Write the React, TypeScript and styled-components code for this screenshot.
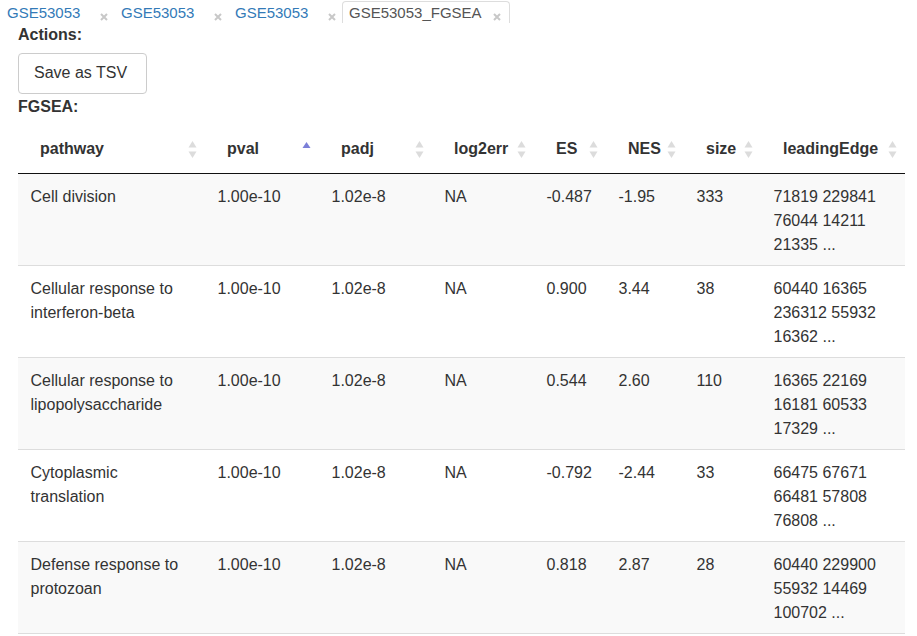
import React from "react";
import styled, { createGlobalStyle } from "styled-components";

const GlobalStyle = createGlobalStyle`
  html, body {
    margin: 0;
    padding: 0;
    background: #fff;
  }
  body {
    font-family: "Liberation Sans", Arial, Helvetica, sans-serif;
    font-size: 16px;
    line-height: 24px;
    color: #333;
  }
`;

const Page = styled.div`
  width: 917px;
`;

const TabBar = styled.ul`
  list-style: none;
  margin: 0;
  padding: 1px 0 0 0;
  display: flex;
  height: 22px;
  overflow: hidden;
`;

const Tab = styled.li<{ $active?: boolean }>`
  display: flex;
  align-items: flex-start;
  height: 26px;
  box-sizing: border-box;
  padding: 1px 8px 0 6px;
  border: 1px solid ${(p) => (p.$active ? "#ddd" : "transparent")};
  border-bottom: none;
  border-radius: 4px 4px 0 0;
  font-size: 15px;
  line-height: 20px;
  color: ${(p) => (p.$active ? "#555" : "#337ab7")};
`;

const TabLabel = styled.span`
  white-space: nowrap;
`;

const Close = styled.span<{ $gap: number }>`
  margin-left: ${(p) => p.$gap}px;
  margin-top: 10px;
  display: flex;
`;

const Content = styled.div`
  padding: 0 12px 0 18px;
`;

const Label = styled.div`
  font-weight: bold;
  font-size: 16px;
  line-height: 24px;
`;

const ActionRow = styled.div`
  padding: 6px 0 1px;
`;

const Button = styled.button`
  font-family: inherit;
  font-size: 16px;
  line-height: 24px;
  color: #333;
  background: #fff;
  border: 1px solid #ccc;
  border-radius: 4px;
  padding: 7px 19px 8px 15px;
  cursor: pointer;
`;

const Table = styled.table`
  width: 887px;
  border-collapse: collapse;
  margin-top: 6px;
  table-layout: fixed;
`;

const Th = styled.th<{ $w: number }>`
  box-sizing: border-box;
  width: ${(p) => p.$w}px;
  text-align: left;
  font-weight: bold;
  padding: 12px 0 12px 22px;
  border-bottom: 1px solid #111;
  white-space: nowrap;
`;

const ThInner = styled.div`
  display: flex;
  align-items: center;
  justify-content: space-between;
  padding-right: 8px;
`;

const Tr = styled.tr<{ $odd: boolean }>`
  background: ${(p) => (p.$odd ? "#f9f9f9" : "#fff")};
  border-bottom: 1px solid #ddd;
`;

const Td = styled.td`
  vertical-align: top;
  padding: 11px 10px 8px 12.5px;
  word-wrap: break-word;
`;

const SortBoth = () => (
  <svg width="9" height="19" viewBox="0 0 9 19">
    <path d="M4.5 1 L8.5 7.5 L0.5 7.5 Z" fill="#dcdcdc" />
    <path d="M4.5 18 L8.5 11.5 L0.5 11.5 Z" fill="#dcdcdc" />
  </svg>
);

const SortAsc = () => (
  <svg width="9" height="19" viewBox="0 0 9 19">
    <path d="M4.5 2 L8.5 8 L0.5 8 Z" fill="#7b7fd8" />
  </svg>
);

const CloseIcon = () => (
  <svg width="8" height="8" viewBox="0 0 8 8">
    <path d="M1 1 L7 7 M7 1 L1 7" stroke="#c8c8c8" strokeWidth="2" />
  </svg>
);

const columns = [
  { name: "pathway", w: 187 },
  { name: "pval", w: 114, asc: true },
  { name: "padj", w: 113 },
  { name: "log2err", w: 102 },
  { name: "ES", w: 72 },
  { name: "NES", w: 78 },
  { name: "size", w: 77 },
  { name: "leadingEdge", w: 144 },
];

const rows = [
  ["Cell division", "1.00e-10", "1.02e-8", "NA", "-0.487", "-1.95", "333", "71819 229841 76044 14211 21335 ..."],
  ["Cellular response to interferon-beta", "1.00e-10", "1.02e-8", "NA", "0.900", "3.44", "38", "60440 16365 236312 55932 16362 ..."],
  ["Cellular response to lipopolysaccharide", "1.00e-10", "1.02e-8", "NA", "0.544", "2.60", "110", "16365 22169 16181 60533 17329 ..."],
  ["Cytoplasmic translation", "1.00e-10", "1.02e-8", "NA", "-0.792", "-2.44", "33", "66475 67671 66481 57808 76808 ..."],
  ["Defense response to protozoan", "1.00e-10", "1.02e-8", "NA", "0.818", "2.87", "28", "60440 229900 55932 14469 100702 ..."],
];

const tabs = [
  { label: "GSE53053", gap: 20 },
  { label: "GSE53053", gap: 20 },
  { label: "GSE53053", gap: 20 },
  { label: "GSE53053_FGSEA", gap: 11, active: true },
];

const App = () => {
  return (
    <Page>
      <GlobalStyle />
      <TabBar>
        {tabs.map((t, i) => (
          <Tab key={i} $active={t.active} style={{ width: t.active ? undefined : 114 }}>
            <TabLabel>{t.label}</TabLabel>
            <Close $gap={t.gap}>
              <CloseIcon />
            </Close>
          </Tab>
        ))}
      </TabBar>
      <Content>
        <Label>Actions:</Label>
        <ActionRow>
          <Button>Save as TSV</Button>
        </ActionRow>
        <Label>FGSEA:</Label>
        <Table>
          <thead>
            <tr>
              {columns.map((c) => (
                <Th key={c.name} $w={c.w}>
                  <ThInner>
                    <span>{c.name}</span>
                    {c.asc ? <SortAsc /> : <SortBoth />}
                  </ThInner>
                </Th>
              ))}
            </tr>
          </thead>
          <tbody>
            {rows.map((r, i) => (
              <Tr key={i} $odd={i % 2 === 0}>
                {r.map((cell, j) => (
                  <Td key={j}>{cell}</Td>
                ))}
              </Tr>
            ))}
          </tbody>
        </Table>
      </Content>
    </Page>
  );
};

export default App;
